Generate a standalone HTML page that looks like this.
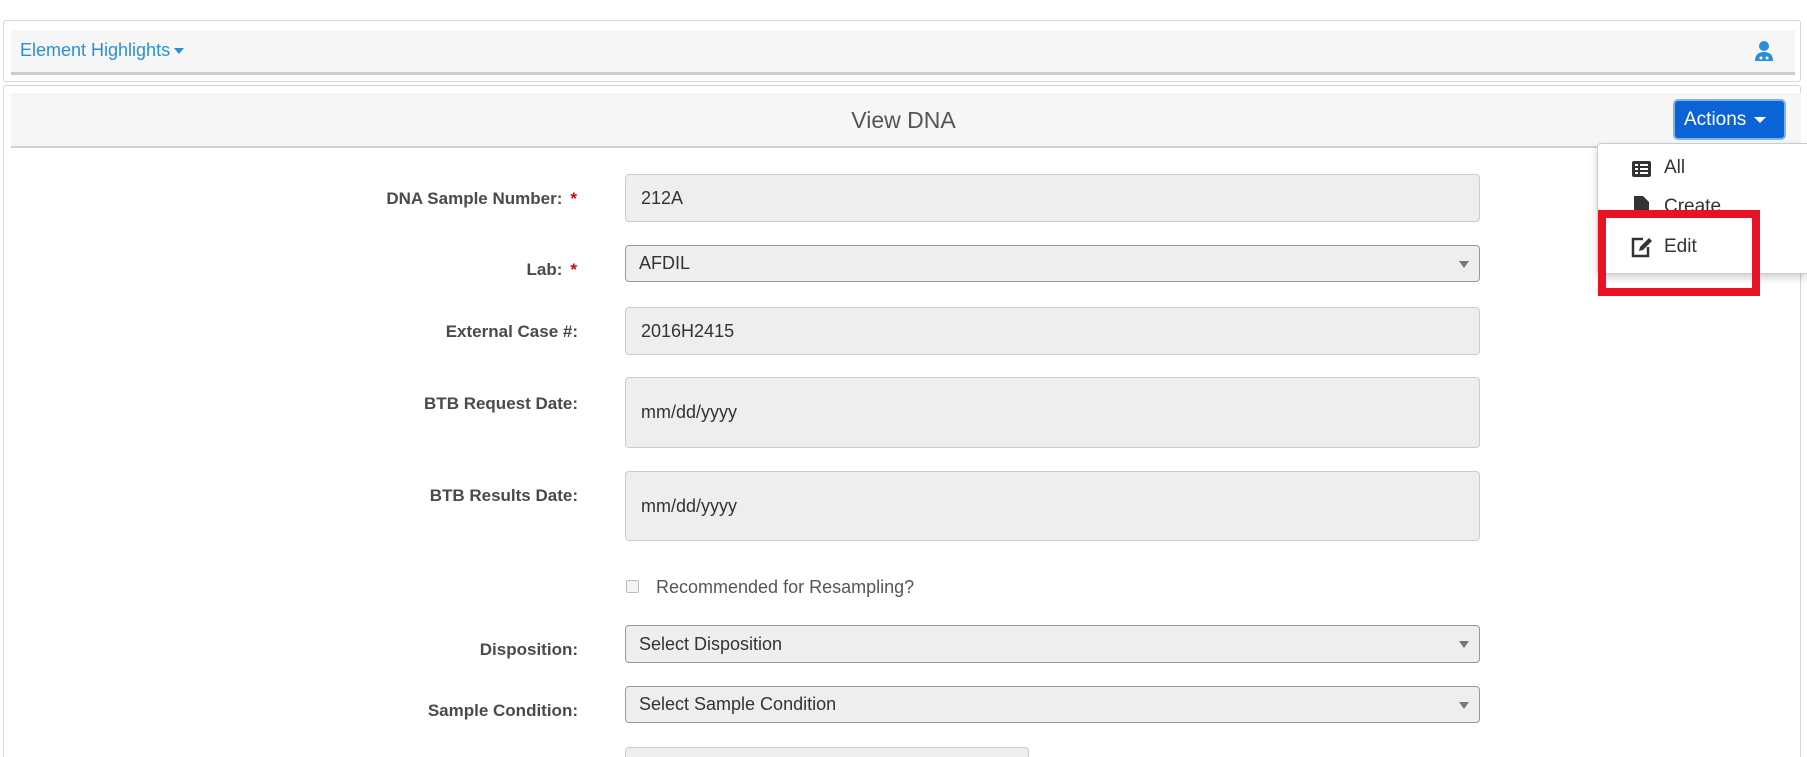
<!DOCTYPE html>
<html style="width:1807px;height:757px;overflow:hidden"><head><style>
*{box-sizing:border-box;margin:0;padding:0}
body{width:1807px;height:757px;background:#fff;font-family:"Liberation Sans",sans-serif;position:relative;overflow:hidden;color:#333}
.a{position:absolute}
.lbl{position:absolute;right:1230px;font-weight:bold;font-size:17px;color:#4a4a4a;text-align:right;white-space:nowrap}
.star{color:#d00;margin-left:8px}
.inp{position:absolute;left:625px;width:855px;background:#eee;border:1px solid #ccc;border-radius:4px;font-size:18px;color:#333;padding-left:15px;display:flex;align-items:center}
.sel{border:1px solid #999;padding-left:13px}
.sel:after{content:"";position:absolute;right:10px;top:50%;margin-top:-3px;border-left:5px solid transparent;border-right:5px solid transparent;border-top:7px solid #777}
</style></head><body>
<div class="a" style="left:3px;top:20px;width:1798px;height:62px;border:1px solid #d6d6d6;border-radius:3px"></div>
<div class="a" style="left:11px;top:30px;width:1784px;height:45px;background:#f6f6f6;border-bottom:3px solid #ccc"></div>
<div class="a" style="left:20px;top:40px;font-size:18px;color:#2a8fd8">Element Highlights<span style="display:inline-block;margin-left:4px;vertical-align:middle;border-left:5px solid transparent;border-right:5px solid transparent;border-top:6px solid #2a8fd8"></span></div>
<svg class="a" style="left:1754px;top:40px" width="20" height="22" viewBox="0 0 20 22"><circle cx="10" cy="6" r="5" fill="#2a8fd8"/><path d="M1 21 Q1 12 10 12 Q19 12 19 21Z" fill="#2a8fd8"/><circle cx="7" cy="18" r="1.5" fill="#fff"/><circle cx="13" cy="18" r="1.5" fill="#fff"/></svg>
<div class="a" style="left:3px;top:85px;width:1798px;height:672px;border:1px solid #d6d6d6;border-bottom:none;border-radius:3px 3px 0 0"></div>
<div class="a" style="left:11px;top:93px;width:1790px;height:55px;background:#f6f6f6;border-bottom:2px solid #d0d0d0"></div>
<div class="a" style="left:0;width:1807px;top:107px;text-align:center;font-size:23px;color:#555">View DNA</div>
<div class="a" style="left:1673px;top:99px;width:113px;height:41px;background:#0b64d6;border:2px solid #7fb3f0;border-radius:5px;color:#fff;font-size:19px;padding:8px 0 0 9px">Actions<span style="display:inline-block;margin-left:8px;vertical-align:middle;border-left:6px solid transparent;border-right:6px solid transparent;border-top:6px solid #fff"></span></div>
<div class="a" style="left:1597px;top:143px;width:210px;height:131px;background:#fff;border:1px solid #ccc;border-right:none;border-radius:4px 0 0 4px;box-shadow:0 4px 8px rgba(0,0,0,.18)"></div>
<div class="a" style="left:1632px;top:161px;width:19px;height:16px;background:#333;border-radius:2px"><div style="position:absolute;left:3px;top:3px;width:3px;height:2px;background:#fff"></div><div style="position:absolute;left:3px;top:7px;width:3px;height:2px;background:#fff"></div><div style="position:absolute;left:3px;top:11px;width:3px;height:2px;background:#fff"></div><div style="position:absolute;left:8px;top:3px;width:8px;height:2px;background:#fff"></div><div style="position:absolute;left:8px;top:7px;width:8px;height:2px;background:#fff"></div><div style="position:absolute;left:8px;top:11px;width:8px;height:2px;background:#fff"></div></div>
<div class="a" style="left:1664px;top:157px;font-size:19px;color:#333">All</div>
<svg class="a" style="left:1634px;top:196px" width="15" height="18"><path d="M0 0H9L15 6V18H0Z" fill="#333"/></svg>
<div class="a" style="left:1664px;top:196px;font-size:19px;color:#333">Create</div>
<svg class="a" style="left:1630px;top:236px" width="24" height="22" viewBox="0 0 24 22"><path d="M13 3H3V20H18V11" fill="none" stroke="#333" stroke-width="2.5"/><path d="M9 15L10 11L19 2L22 5L13 14Z" fill="#333"/></svg>
<div class="a" style="left:1664px;top:236px;font-size:19px;color:#333">Edit</div>
<div class="a" style="left:1598px;top:210px;width:162px;height:86px;border:8px solid #e81224"></div>

<div class="lbl" style="top:189px">DNA Sample Number:<span class="star">*</span></div>
<div class="inp" style="top:174px;height:48px">212A</div>
<div class="lbl" style="top:260px">Lab:<span class="star">*</span></div>
<div class="inp sel" style="top:245px;height:37px">AFDIL</div>
<div class="lbl" style="top:322px;right:1229px">External Case #:</div>
<div class="inp" style="top:307px;height:48px">2016H2415</div>
<div class="lbl" style="top:394px;right:1229px">BTB Request Date:</div>
<div class="inp" style="top:377px;height:71px">mm/dd/yyyy</div>
<div class="lbl" style="top:486px;right:1229px">BTB Results Date:</div>
<div class="inp" style="top:471px;height:70px">mm/dd/yyyy</div>
<div class="a" style="left:626px;top:580px;width:13px;height:13px;border:1px solid #bbb;border-radius:2px;background:#f4f4f4"></div>
<div class="a" style="left:656px;top:577px;font-size:18px;color:#555">Recommended for Resampling?</div>
<div class="lbl" style="top:640px;right:1229px">Disposition:</div>
<div class="inp sel" style="top:625px;height:38px">Select Disposition</div>
<div class="lbl" style="top:701px;right:1229px">Sample Condition:</div>
<div class="inp sel" style="top:686px;height:37px">Select Sample Condition</div>
<div class="inp" style="top:747px;height:10px;width:404px;border-bottom:none;border-radius:4px 4px 0 0"></div>
</body></html>
